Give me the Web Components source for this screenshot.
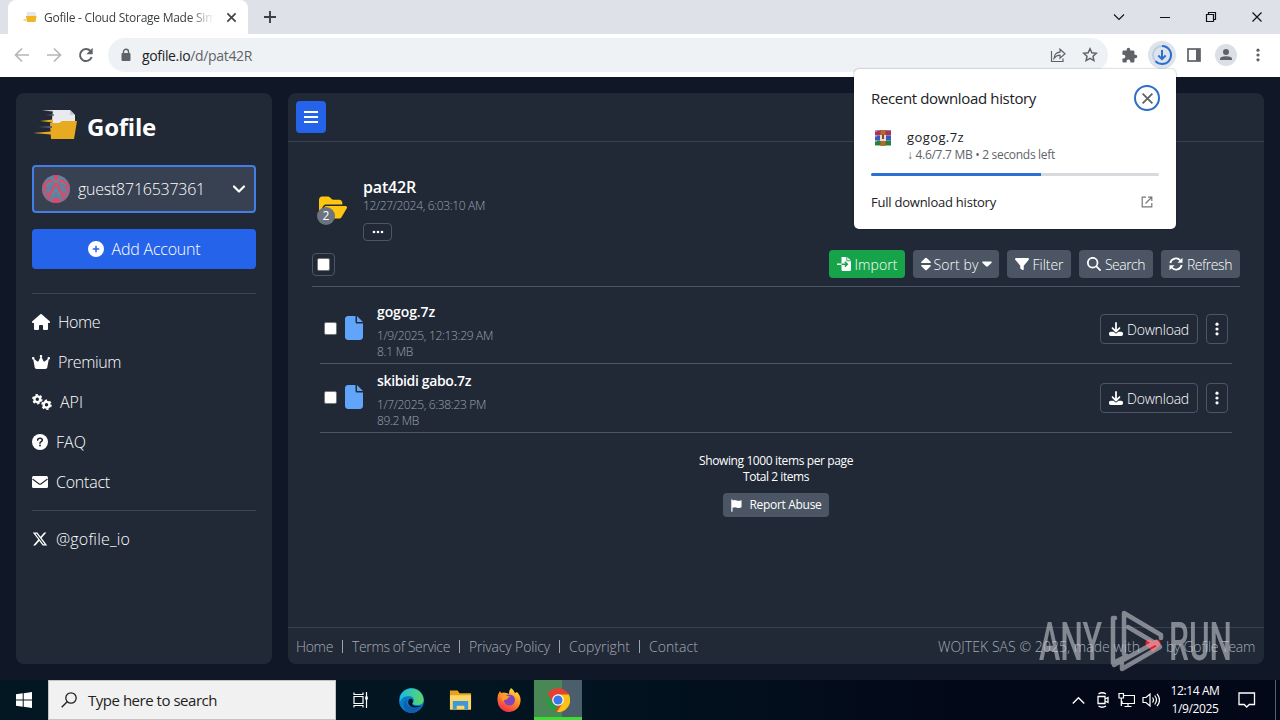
<!DOCTYPE html>
<html lang="en">
<head>
<meta charset="utf-8">
<title>Gofile - Cloud Storage Made Simple</title>
<style>
  body {
    margin: 0;
    width: 1280px;
    height: 720px;
    overflow: hidden;
    display: flex;
    flex-direction: column;
    position: relative;
    background: #101727;
    font-family: "Open Sans", "Noto Sans", sans-serif;
    font-size: 16px;
  }
  main {
    height: 571px;
    padding: 16px;
    display: flex;
    gap: 16px;
  }
</style>
</head>
<body>
<browser-chrome></browser-chrome>
<main>
  <side-bar></side-bar>
  <file-manager>
    <file-row name="gogog.7z" name-w="58" date="1/9/2025, 12:13:29 AM" date-w="116" size="8.1 MB" size-w="36"></file-row>
    <file-row name="skibidi gabo.7z" name-w="94" date="1/7/2025, 6:38:23 PM" date-w="109" size="89.2 MB" size-w="42"></file-row>
  </file-manager>
</main>
<task-bar></task-bar>
<download-popup></download-popup>
<water-mark></water-mark>

<script>
// name: [viewBox, markup]
const icons = {
  house: ["0 0 576 512", '<path d="M575.8 255.5c0 18-15 32.1-32 32.1h-32l.7 160.2V472c0 22.1-17.9 40-40 40H392c-22.1 0-40-17.9-40-40V384c0-17.700-14.300-32-32-32H256c-17.700 0-32 14.300-32 32v88c0 22.100-17.900 40-40 40H104c-22.100 0-40-17.900-40-40V287.600H32c-18 0-32-14-32-32.100c0-9 3-17 10-24L266.400 8c7-7 15-8 22-8s15 2 21 7L564.800 231.500c8 7 12 15 11 24z"/>'],
  crown: ["0 0 576 512", '<path d="M309 106c11.4-7 19-19.7 19-34c0-22.1-17.9-40-40-40s-40 17.9-40 40c0 14.4 7.6 27 19 34L209.7 220.6c-9.1 18.2-32.7 23.4-48.6 10.7L72 160c5-6.7 8-15 8-24c0-22.1-17.9-40-40-40S0 113.9 0 136s17.9 40 40 40h.7L86.4 427.4c5.5 30.4 32 52.6 63 52.6H426.6c30.9 0 57.4-22.1 63-52.6L535.3 176h.7c22.1 0 40-17.900 40-40s-17.900-40-40-40s-40 17.900-40 40c0 9 3 17.300 8 24l-89.100 71.300c-15.900 12.700-39.500 7.500-48.600-10.700L309 106z"/>'],
  gears: ["0 0 20 16", '<g fill="none" stroke="currentColor"><circle cx="5.300" cy="5.200" r="2.900" stroke-width="2.300"/><circle cx="5.300" cy="5.200" r="4.400" stroke-width="1.700" stroke-dasharray="2.300 2.308"/><circle cx="14.500" cy="10.800" r="2.900" stroke-width="2.300"/><circle cx="14.500" cy="10.800" r="4.400" stroke-width="1.700" stroke-dasharray="2.300 2.308"/></g>'],
  question: ["0 0 16 16", '<circle cx="8" cy="8" r="8"/><path d="M5.700 6.100C5.700 3.600 10.300 3.500 10.300 6.200C10.300 7.700 8 7.700 8 9.300" fill="none" stroke="#212937" stroke-width="1.600" stroke-linecap="round"/><circle cx="8" cy="11.600" r="1" fill="#212937"/>'],
  mail: ["0 0 16 16", '<rect y="2" width="16" height="12" rx="1.500"/><path d="M.5 5l6.300 4.700q1.200.8 2.400 0L15.500 5" fill="none" stroke="#212937" stroke-width="1.100"/>'],
  x: ["0 0 512 512", '<path d="M389.2 48h70.6L305.6 224.2 487 464H345L233.7 318.6 106.5 464H35.8L200.7 275.5 26.8 48H172.4L272.9 180.9 389.2 48zM364.4 421.8h39.1L151.1 88h-42L364.4 421.8z"/>'],
  plus: ["0 0 512 512", '<path d="M256 512A256 256 0 1 0 256 0a256 256 0 1 0 0 512zM232 344V280H168c-13.3 0-24-10.7-24-24s10.7-24 24-24h64V168c0-13.3 10.7-24 24-24s24 10.7 24 24v64h64c13.3 0 24 10.7 24 24s-10.7 24-24 24H280v64c0 13.3-10.7 24-24 24s-24-10.7-24-24z"/>'],
  chevron: ["0 0 14 14", '<path d="M2 4.500l5 5 5-5" fill="none" stroke="currentColor" stroke-width="2.200" stroke-linecap="round" stroke-linejoin="round"/>'],
  bars: ["0 0 14 14", '<path d="M0 2h14M0 7h14M0 12h14" stroke="currentColor" stroke-width="2"/>'],
  folder: ["0 0 576 512", '<path d="M88.7 223.8L0 375.8V96C0 60.7 28.7 32 64 32H181.5c17 0 33.3 6.7 45.3 18.7l26.5 26.5c12 12 28.3 18.7 45.3 18.7H416c35.3 0 64 28.7 64 64v32H144c-22.8 0-43.8 12.1-55.3 31.8zm27.6 16.1C122.1 230 132.6 224 144 224H544c11.5 0 22 6.1 27.7 16.1s5.7 22.2-.1 32.1l-112 192C453.9 474 443.4 480 432 480H32c-11.500 0-22-6.100-27.700-16.100s-5.700-22.200 .1-32.100l112-192z"/>'],
  dots: ["0 0 12 4", '<circle cx="2" cy="2" r="1.300"/><circle cx="6" cy="2" r="1.300"/><circle cx="10" cy="2" r="1.300"/>'],
  kebab: ["0 0 4 14", '<circle cx="2" cy="2.200" r="1.600"/><circle cx="2" cy="7" r="1.600"/><circle cx="2" cy="11.800" r="1.600"/>'],
  import: ["0 0 16 14", '<path d="M4.500 0h5.500l4 3.600V12.500q0 1.500-1.500 1.500H6q-1.500 0-1.500-1.500z"/><path d="M4.500 7.200h5.500M7.800 4.800l2.500 2.400-2.500 2.400" fill="none" stroke="#16a34a" stroke-width="1.500"/><path d="M0 7.200h4.500" stroke="currentColor" stroke-width="1.400"/><path d="M9.800 0v3.800H14" fill="none" stroke="#16a34a" stroke-width=".9"/>'],
  sort: ["0 0 10 14", '<path d="M5 .7Q5.500.7 6 1.200L9.600 4.800Q10.200 6 9 6H1Q-.2 6 .4 4.800L4 1.200Q4.500.7 5 .7zM5 13.300Q5.500 13.300 6 12.800L9.600 9.200Q10.200 8 9 8H1Q-.2 8 .4 9.200L4 12.800Q4.500 13.300 5 13.300z"/>'],
  caret: ["0 0 10 14", '<path d="M1 4.500H9Q10.200 4.500 9.600 5.700L6 9.300Q5 10 4 9.300L.4 5.700Q-.2 4.500 1 4.500z"/>'],
  filter: ["0 0 512 512", '<path d="M3.9 54.9C10.5 40.9 24.5 32 40 32H472c15.5 0 29.5 8.9 36.1 22.9s4.6 30.5-5.2 42.5L320 320.9V448c0 12.1-6.800 23.200-17.700 28.600s-23.800 4.300-33.500-3l-64-48c-8.100-6-12.800-15.500-12.800-25.600V320.900L9 97.300C-.7 85.400-2.800 68.800 3.900 54.900z"/>'],
  search: ["0 0 512 512", '<path d="M416 208c0 45.900-14.900 88.300-40 122.700L502.600 457.400c12.500 12.500 12.500 32.800 0 45.300s-32.800 12.500-45.300 0L330.700 376c-34.400 25.200-76.800 40-122.700 40C93.100 416 0 322.900 0 208S93.100 0 208 0S416 93.100 416 208zM208 352a144 144 0 1 0 0-288 144 144 0 1 0 0 288z"/>'],
  rotate: ["0 0 14 14", '<path d="M1.300 6A5.800 5.800 0 0 1 11.400 3.500M12.700 8A5.800 5.800 0 0 1 2.600 10.500" fill="none" stroke="currentColor" stroke-width="1.800"/><path d="M13.500.7V5.700H8.500zM.5 13.300V8.300H5.500z"/>'],
  file: ["0 0 384 512", '<path d="M0 64C0 28.700 28.700 0 64 0H224V128c0 17.700 14.300 32 32 32H384V448c0 35.300-28.700 64-64 64H64c-35.300 0-64-28.700-64-64V64zm384 64H256V0L384 128z"/>'],
  download: ["0 0 512 512", '<path d="M288 32c0-17.700-14.300-32-32-32s-32 14.300-32 32V274.700l-73.400-73.400c-12.500-12.500-32.800-12.500-45.300 0s-12.500 32.800 0 45.300l128 128c12.500 12.500 32.800 12.500 45.300 0l128-128c12.500-12.500 12.500-32.800 0-45.300s-32.800-12.500-45.300 0L288 274.700V32zM64 352c-35.300 0-64 28.700-64 64v32c0 35.300 28.700 64 64 64H448c35.300 0 64-28.700 64-64V416c0-35.300-28.700-64-64-64H346.500l-45.300 45.300c-25 25-65.500 25-90.500 0L165.500 352H64z"/>'],
  flag: ["0 0 12 14", '<path d="M.3.5Q1 0 1.700.5V1.500Q4 .5 6 1.500T11.500 1.200V9Q9 10.400 6.500 9.400T1.700 9.500V13.500Q1 14 .3 13.500z"/>'],
  logo: ["0 0 44 32", '<path d="M20 1h17l5 5v14H18z" fill="#e9eaf0"/><path d="M37 1v5h5z" fill="#c5c8d2"/><path d="M17 14h9l3-2h15l-3 18H18z" fill="#e8aa20"/><path d="M7 12l13-1.500v3zM0 24l18-1.500v3z" fill="#e8aa20"/><path d="M9 1.500L21 1v1.500z" fill="#e9eaf0"/><path d="M12 6l9-.7v1.500zM5 18l14-1v2z" fill="#5a6069"/>'],
  avatar: ["0 0 28 28", '<defs><clipPath id="c"><circle cx="14" cy="14" r="14"/></clipPath></defs><g clip-path="url(#c)"><rect width="28" height="28" fill="#62809f"/><g fill="none" stroke="#dc4a67" stroke-width="2.200"><path d="M0 12Q14-4 28 12M1 17Q7 4 14 5T27 17M5 26L14 7L23 26M8 17h12M0 21l7-3M28 21l-7-3M9 28q5-8 10 0"/></g><path d="M9 3l5 4 5-4M4 11l5-4M24 11l-5-4M10 20l4-5 4 5" fill="none" stroke="#3c9ead" stroke-width="1.500"/><path d="M11 0h6l-3 4zM11 28h6l-3-5z" fill="#ef4060"/></g>'],
  back: ["0 0 16 16", '<path d="M15 8H2M8 1.500L1.500 8 8 14.500" fill="none" stroke="currentColor" stroke-width="1.700"/>'],
  forward: ["0 0 16 16", '<path d="M1 8h13M8 1.500L14.500 8 8 14.500" fill="none" stroke="currentColor" stroke-width="1.700"/>'],
  reload: ["0 0 16 16", '<path d="M13.700 10A6 6 0 1 1 12.500 4" fill="none" stroke="currentColor" stroke-width="2"/><path d="M14.700.7v6.500H8.300z"/>'],
  lock: ["0 0 10 14", '<rect x=".5" y="5" width="9" height="8" rx="1"/><path d="M2.500 5.500V3.700a2.500 2.500 0 0 1 5 0v1.800" fill="none" stroke="currentColor" stroke-width="1.400"/>'],
  share: ["0 0 16 16", '<path d="M1.500 4v10.500h11.500v-3M4 11.500Q4.500 5.500 10 5.200V2.200l5 4.500-5 4.500V8.200Q6.500 8 4 11.500z" fill="none" stroke="currentColor" stroke-width="1.200"/>'],
  star: ["0 0 16 16", '<path d="M8 1.800l1.900 4 4.400.5-3.300 3 .9 4.300L8 11.400l-3.900 2.200.9-4.300-3.300-3 4.400-.5z" fill="none" stroke="currentColor" stroke-width="1.500"/>'],
  puzzle: ["0 0 24 24", '<path d="M20.500 11H19V7a2 2 0 0 0-2-2h-4V3.500a2.500 2.500 0 0 0-5 0V5H4a2 2 0 0 0-2 2v3.800h1.500a2.700 2.700 0 0 1 0 5.400H2V20a2 2 0 0 0 2 2h3.800v-1.500a2.700 2.700 0 0 1 5.400 0V22H17a2 2 0 0 0 2-2v-4h1.500a2.500 2.500 0 0 0 0-5z"/>'],
  progress: ["0 0 28 28", '<circle cx="14" cy="14" r="14" fill="#dfe3ea"/><circle cx="14" cy="14" r="9" fill="none" stroke="#bccbe4" stroke-width="2"/><path d="M14 5a9 9 0 1 1-6.500 15.200" fill="none" stroke="#2c6fd2" stroke-width="2"/><path d="M14 9v9M10.300 14.500L14 18.200l3.700-3.700" fill="none" stroke="#2c6fd2" stroke-width="2"/>'],
  panel: ["0 0 14 14", '<rect x="1" y="1" width="12" height="12" fill="none" stroke="currentColor" stroke-width="1.700"/><path d="M9 1h4v12H9z"/>'],
  person: ["0 0 22 22", '<circle cx="11" cy="11" r="11" fill="#dcdfe6"/><circle cx="11" cy="8" r="3"/><path d="M5 16v-1.200Q5 12.300 11 12.300t6 2.500V16z"/>'],
  tabicon: ["0 0 14 14", '<path d="M4 2h8l1 2v4H3z" fill="#e6e6ea"/><path d="M3 6h10.500L12.500 12H4z" fill="#efb526"/><path d="M0 9h4v2H1z" fill="#f6d99a"/>'],
  close: ["0 0 12 12", '<path d="M1.500 1.500l9 9M10.500 1.500l-9 9" stroke="currentColor" stroke-width="var(--sw, 1.700)"/>'],
  add: ["0 0 12 12", '<path d="M6 0v12M0 6h12" stroke="currentColor" stroke-width="1.900"/>'],
  down: ["0 0 12 12", '<path d="M1 3.500l5 5 5-5" fill="none" stroke="currentColor" stroke-width="1.100"/>'],
  up: ["0 0 12 12", '<path d="M.7 8.800L6 3.500l5.300 5.300" fill="none" stroke="currentColor" stroke-width="1.300"/>'],
  minimize: ["0 0 12 12", '<path d="M1 6.500h10" stroke="currentColor"/>'],
  restore: ["0 0 12 12", '<path d="M1.500 3.500h7v7h-7zM3.500 3.500v-2h7v7h-2" fill="none" stroke="currentColor" stroke-width="1.200"/>'],
  rar: ["0 0 16 16", '<path d="M0 0h16v5H0z" fill="#b03050"/><path d="M0 5h16v5H0z" fill="#3d58b8"/><path d="M0 10h16v5.500H0z" fill="#25823d"/><path d="M5.500 0h5v16h-5z" fill="#b96a2b"/><path d="M5 5h6v6H5z" fill="#e4ddd2"/><path d="M7 4.500h2V9H7z" fill="#70502f"/><path d="M0 .5h5M11 .5h5M0 5.500h5M11 5.500h5M0 10.500h5M11 10.500h5" stroke="#7f84b8"/><path d="M1 0v16" stroke="#dcc7d6" stroke-dasharray="2 3"/>'],
  external: ["0 0 12 12", '<path d="M5 1.200H1.200v9.600h9.600V7M7 1.200h3.800V5M10.500 1.500L4.500 7.500" fill="none" stroke="currentColor" stroke-width="1.200"/>'],
  windows: ["0 0 16 16", '<path d="M0 2.300L6.700 1.300V7.500H0zM7.700 1.200L16 0v7.500H7.700zM0 8.500h6.700v6.200L0 13.700zM7.700 8.500H16V16l-8.300-1.200z"/>'],
  lens: ["0 0 16 16", '<circle cx="10" cy="6" r="5.200" fill="none" stroke="currentColor" stroke-width="1.300"/><path d="M6.200 9.700L.7 15.300" stroke="currentColor" stroke-width="1.400"/>'],
  tasks: ["0 0 16 16", '<path d="M1.500 4.500h9v7h-9zM1.500.5v2h9v-2M1.500 15.500v-2h9v2M14 0v16" fill="none" stroke="currentColor" stroke-width="1.200"/><path d="M12.700 4.500h2.600v3h-2.600z"/>'],
  edge: ["0 0 24 24", '<defs><linearGradient id="e" x1="0" x2="1"><stop stop-color="#1abbe0"/><stop offset="1" stop-color="#5fd764"/></linearGradient></defs><circle cx="12" cy="12" r="12" fill="#087bc6"/><path d="M1 8C5-1 17-2 22 6q4 8-2 10-5 1-7-1c3-4 0-7-3-7Q4 7 1 13z" fill="url(#e)"/><path d="M8 10c-3 5 1 10 9 8q4-1 5-1-4 7-10 7C3 23 3 13 8 10z" fill="#105eb0"/><path d="M10 10.500q-2 2-1 4.500 2 4 8 3.500l5-1.500-4 .2q-5 0-5.500-2.200 2-3-.3-4.800z" fill="#021721"/>'],
  explorer: ["0 0 24 22", '<path d="M1 1h8l2 3h12v17H1z" fill="#e8a41c"/><path d="M1 6h22v15H1z" fill="#fbd66a"/><path d="M4 12h16v9h-4v-4H8v4H4z" fill="#3d98d9"/><path d="M2 2h6v2H2z" fill="#ef9a27"/>'],
  firefox: ["0 0 24 24", '<defs><linearGradient id="f" x1=".8" y1="0" x2=".3" y2="1"><stop stop-color="#ffe53d"/><stop offset=".5" stop-color="#ff8a25"/><stop offset="1" stop-color="#f0284f"/></linearGradient></defs><path d="M14 0q3 2 4 5l2-1q4 4 3.500 9A11.500 11.500 0 0 1 .5 12Q0 7 3 3l1 2 3-.5Q11 5 12 6q0-4 2-6z" fill="url(#f)"/><circle cx="12.500" cy="12" r="5.500" fill="#8044bd"/><path d="M4 8q4-2 6 0l4 .5q-4 1-4 3-3-.5-4 2z" fill="#ff9c29"/>'],
  chrome: ["0 0 24 24", '<circle cx="12" cy="12" r="12" fill="#e34133"/><path d="M12 6.500h10.700A12 12 0 0 1 11 24L17 14.500z" fill="#fbc414"/><path d="M1.600 6l5.700 9.500L12 17.500 9.500 23.700A12 12 0 0 1 1.600 6z" fill="#269b48"/><circle cx="12" cy="12" r="5.800" fill="#fff"/><circle cx="12" cy="12" r="4.600" fill="#3779e6"/>'],
  camera: ["0 0 16 16", '<path d="M3 4.500h7v7H3zM10 7l3-1.500v5L10 9M3.500 2Q7-.5 11 2M3.500 14Q7 16.500 11 14" fill="none" stroke="currentColor" stroke-width="1.300"/>'],
  network: ["0 0 17 16", '<path d="M5.500 3.500h11v8H4V9M10 11.500v3M6.500 14.500h7M1 1.500h4.500V6H1zM3.300 6v8" fill="none" stroke="currentColor" stroke-width="1.200"/>'],
  volume: ["0 0 18 16", '<path d="M1 5.500h3l4-3.500v12l-4-3.500H1zM10.500 5.500q2 2.500 0 5M12.700 3.500q3.600 4.500 0 9M15 1.800q5 6.200 0 12.400" fill="none" stroke="currentColor" stroke-width="1.200"/>'],
  notice: ["0 0 18 16", '<path d="M1 1h15.500v11.500h-5.200L8.700 15l-2.500-2.500H1z" fill="none" stroke="currentColor" stroke-width="1.300"/>'],
  heart: ["0 0 16 14", '<path d="M8 13L1.500 7C-2 2 4-2 8 2.300 12-2 18 2 14.500 7z" fill="#e01c28"/>'],
};

class UiIcon extends HTMLElement {
  constructor() {
    super();
    this.attachShadow({ mode: "open" });
  }

  connectedCallback() {
    const [box, markup] = icons[this.getAttribute("name")];
    const width = this.getAttribute("w") || 16;
    const height = this.getAttribute("h") || width;
    this.shadowRoot.innerHTML = `
      <style>
        :host { display: inline-flex; flex: none; }
        svg { display: block; fill: currentColor; }
      </style>
      <svg width="${width}" height="${height}" viewBox="${box}">${markup}</svg>`;
  }
}

// One line of text, tracked so that it fills the width in its "w" attribute
class UiText extends HTMLElement {
  constructor() {
    super();
    this.attachShadow({ mode: "open" });
    this.shadowRoot.innerHTML = `
      <style>
        :host { display: inline-block; flex: none; white-space: nowrap; }
      </style>
      <slot></slot>`;
  }

  connectedCallback() {
    const width = Number(this.getAttribute("w"));
    if (!width) return;
    const natural = this.getBoundingClientRect().width;
    this.style.letterSpacing = (width - natural) / this.textContent.length + "px";
    this.style.width = width + "px";
  }
}

class BrowserChrome extends HTMLElement {
  constructor() {
    super();
    this.attachShadow({ mode: "open" });
    this.shadowRoot.innerHTML = `
      <style>
        :host { display: block; height: 77px; flex: none; background: #fff; color: #3c4043; }
        .tabs { height: 34px; background: #dee1e8; display: flex; align-items: center; }
        .tab {
          box-sizing: border-box; width: 240px; height: 34px; margin-left: 8px; padding: 0 10px 0 15px;
          display: flex; align-items: center; background: #fff; border-radius: 8px 8px 0 0; font-size: 12px;
        }
        .title { width: 170px; margin-left: 7px; overflow: hidden; -webkit-mask-image: linear-gradient(to right, #000 145px, transparent 170px); }
        .tab ui-icon:last-child { margin-left: 12px; }
        .new { margin-left: 16px; }
        .window { margin-left: auto; display: flex; gap: 34px; padding-right: 17px; color: #111; }
        .bar { height: 42px; display: flex; align-items: center; color: #5f6368; }
        .nav { display: flex; gap: 16px; padding-left: 14px; width: 94px; }
        .pale { color: #b5b7ba; }
        .address {
          box-sizing: border-box; width: 1000px; height: 34px; border-radius: 17px; background: #eff2f5;
          display: flex; align-items: center; padding: 0 10px 0 13px; font-size: 14px;
        }
        .address ui-text { margin-left: 11px; }
        .address b { font-weight: 400; color: #202124; }
        .address .share { margin-left: auto; margin-right: 16px; }
        .tools { display: flex; align-items: center; padding-left: 13px; }
      </style>
      <div class="tabs">
        <div class="tab">
          <ui-icon name="tabicon" w="14"></ui-icon>
          <div class="title"><ui-text w="172">Gofile - Cloud Storage Made Sim</ui-text></div>
          <ui-icon name="close" w="11"></ui-icon>
        </div>
        <ui-icon class="new" name="add" w="12"></ui-icon>
        <div class="window">
          <ui-icon name="down" w="12"></ui-icon>
          <ui-icon name="minimize" w="12"></ui-icon>
          <ui-icon name="restore" w="12"></ui-icon>
          <ui-icon name="close" w="12" style="--sw: 1.200"></ui-icon>
        </div>
      </div>
      <div class="bar">
        <div class="nav">
          <ui-icon class="pale" name="back" w="16"></ui-icon>
          <ui-icon class="pale" name="forward" w="16"></ui-icon>
          <ui-icon name="reload" w="16"></ui-icon>
        </div>
        <div class="address">
          <ui-icon name="lock" w="10" h="14"></ui-icon>
          <ui-text w="110"><b>gofile.io</b>/d/pat42R</ui-text>
          <ui-icon class="share" name="share" w="16"></ui-icon>
          <ui-icon name="star" w="16"></ui-icon>
        </div>
        <div class="tools">
          <ui-icon name="puzzle" w="17"></ui-icon>
          <ui-icon name="progress" w="28" style="margin-left: 10px"></ui-icon>
          <ui-icon name="panel" w="14" style="margin-left: 11px"></ui-icon>
          <ui-icon name="person" w="22" style="margin-left: 14px"></ui-icon>
          <ui-icon name="kebab" w="4" h="14" style="margin-left: 19px"></ui-icon>
        </div>
      </div>`;
  }
}

class SideBar extends HTMLElement {
  constructor() {
    super();
    this.attachShadow({ mode: "open" });
    this.shadowRoot.innerHTML = `
      <style>
        :host {
          box-sizing: border-box; width: 256px; padding: 16px; flex: none; display: flex; flex-direction: column;
          border-radius: 8px; background: #212937; color: #fff; font-weight: 300;
        }
        .brand { height: 32px; display: flex; align-items: center; font-size: 24px; font-weight: 700; }
        .brand ui-text { margin-left: 9px; line-height: 32px; margin-top: 3px; }
        .account {
          box-sizing: border-box; height: 48px; margin-top: 24px; padding: 0 8px; display: flex; align-items: center;
          background: #374151; border: 2px solid #437de6; border-radius: 4px;
        }
        .account ui-text { margin-left: 8px; }
        .account ui-icon:last-child { margin-left: auto; }
        .add {
          height: 40px; margin-top: 16px; display: flex; justify-content: center; align-items: center; gap: 8px;
          background: #2563eb; border-radius: 4px;
        }
        hr { width: 100%; margin: 0; border: 0; height: 1px; background: #3c4553; }
        nav { padding: 8px 0; }
        .item { height: 40px; display: flex; align-items: center; gap: 8px; }
      </style>
      <div class="brand"><ui-icon name="logo" w="46" h="32"></ui-icon><ui-text w="69">Gofile</ui-text></div>
      <div class="account">
        <ui-icon name="avatar" w="28"></ui-icon><ui-text w="127">guest8716537361</ui-text>
        <ui-icon name="chevron" w="14"></ui-icon>
      </div>
      <div class="add"><ui-icon name="plus"></ui-icon><ui-text w="89">Add Account</ui-text></div>
      <hr style="margin-top: 24px">
      <nav>
        <div class="item"><ui-icon name="house" w="18" h="16"></ui-icon><ui-text w="42">Home</ui-text></div>
        <div class="item"><ui-icon name="crown" w="18" h="16"></ui-icon><ui-text w="63">Premium</ui-text></div>
        <div class="item"><ui-icon name="gears" w="20" h="16"></ui-icon><ui-text w="23">API</ui-text></div>
        <div class="item"><ui-icon name="question"></ui-icon><ui-text w="30">FAQ</ui-text></div>
        <div class="item"><ui-icon name="mail"></ui-icon><ui-text w="54">Contact</ui-text></div>
      </nav>
      <hr>
      <div class="item" style="margin-top: 8px"><ui-icon name="x"></ui-icon><ui-text w="74">@gofile_io</ui-text></div>`;
  }
}

class FileRow extends HTMLElement {
  constructor() {
    super();
    this.attachShadow({ mode: "open" });
  }

  connectedCallback() {
    const get = (name) => this.getAttribute(name);
    this.shadowRoot.innerHTML = `
      <style>
        :host {
          box-sizing: border-box; height: 69px; padding: 0 4px; display: flex; align-items: center;
          border-bottom: 1px solid #4b5563;
        }
        .check { box-sizing: border-box; width: 13px; height: 13px; margin-bottom: 2px; border: 1px solid #777; border-radius: 2px; background: #fff; }
        .icon { margin-left: 8px; margin-bottom: 2px; color: #60a5fa; }
        .info {
          align-self: flex-start; margin-left: 14px; padding-top: 7px; display: flex; flex-direction: column;
          align-items: flex-start; font-size: 12px; line-height: 16px; color: #9ca3af;
        }
        .name { margin-bottom: 6px; font-size: 14px; line-height: 20px; font-weight: 600; color: #fff; }
        .button {
          box-sizing: border-box; height: 30px; display: flex; justify-content: center; align-items: center; gap: 4px;
          border: 1px solid #4b5563; border-radius: 4px; font-size: 14px;
        }
        .get { width: 98px; margin-left: auto; margin-right: 8px; }
        .more { width: 22px; }
      </style>
      <div class="check"></div>
      <ui-icon class="icon" name="file" w="18" h="24"></ui-icon>
      <div class="info">
        <ui-text class="name" w="${get("name-w")}">${get("name")}</ui-text>
        <ui-text w="${get("date-w")}">${get("date")}</ui-text>
        <ui-text w="${get("size-w")}">${get("size")}</ui-text>
      </div>
      <div class="button get"><ui-icon name="download" w="14"></ui-icon><ui-text w="62">Download</ui-text></div>
      <div class="button more"><ui-icon name="kebab" w="4" h="14"></ui-icon></div>`;
  }
}

class FileManager extends HTMLElement {
  constructor() {
    super();
    this.attachShadow({ mode: "open" });
    this.shadowRoot.innerHTML = `
      <style>
        :host {
          width: 976px; flex: none; display: flex; flex-direction: column; border-radius: 8px;
          background: #212937; color: #fff; font-size: 14px; font-weight: 300;
        }
        header { box-sizing: border-box; height: 49px; padding: 8px; border-bottom: 1px solid #374151; }
        .menu { width: 30px; height: 32px; display: flex; align-items: center; justify-content: center; background: #2563eb; border-radius: 4px; }
        .content { flex: 1; padding: 32px 24px 0; }
        .folder { height: 76px; display: flex; }
        .pic { position: relative; width: 51px; color: #ffc50f; }
        .pic ui-icon { margin: 21px 0 0 7px; }
        .count {
          position: absolute; left: 5px; top: 33px; width: 18px; height: 18px; border-radius: 9px;
          background: #6b7280; color: #fff; font-size: 12px; font-weight: 400; line-height: 18px; text-align: center;
        }
        .about { display: flex; flex-direction: column; align-items: flex-start; }
        .about h1 { margin: 1px 0 0; font-size: 16px; line-height: 24px; font-weight: 600; }
        .date { margin-top: -1px; font-size: 12px; line-height: 16px; color: #9ca3af; }
        .more { box-sizing: border-box; width: 29px; height: 18px; margin-top: 9px; display: flex; align-items: center; justify-content: center; border: 1px solid #4b5563; border-radius: 4px; }
        .bar { height: 28px; padding-bottom: 8px; border-bottom: 1px solid #4b5563; display: flex; align-items: center; gap: 8px; }
        .all { box-sizing: border-box; width: 23px; height: 23px; margin-right: auto; padding: 4px; border: 1px solid #4b5563; border-radius: 4px; }
        .all div { box-sizing: border-box; width: 13px; height: 13px; border: 1px solid #777; border-radius: 2px; background: #fff; }
        .button { box-sizing: border-box; height: 28px; display: flex; align-items: center; justify-content: center; gap: 4px; border-radius: 4px; background: #4b5563; }
        .list { padding: 8px 8px 0; }
        .total { margin-top: 20px; display: flex; flex-direction: column; align-items: center; font-size: 12px; font-weight: 400; line-height: 16px; }
        .report { width: 106px; height: 24px; margin-top: 8px; gap: 8px; }
        footer { height: 36px; padding: 0 9px 0 8px; border-top: 1px solid #374151; display: flex; align-items: center; color: #a5abb6; }
        footer i { width: 1px; height: 13px; margin: 0 9px; background: #9ca3af; }
        .made { margin-left: auto; display: flex; align-items: center; gap: 5px; }
      </style>
      <header><div class="menu"><ui-icon name="bars" w="14"></ui-icon></div></header>
      <div class="content">
        <div class="folder">
          <div class="pic"><ui-icon name="folder" w="28" h="25"></ui-icon><div class="count">2</div></div>
          <div class="about">
            <h1><ui-text w="53">pat42R</ui-text></h1>
            <ui-text class="date" w="122">12/27/2024, 6:03:10 AM</ui-text>
            <div class="more"><ui-icon name="dots" w="12" h="4"></ui-icon></div>
          </div>
        </div>
        <div class="bar">
          <div class="all"><div></div></div>
          <div class="button" style="width: 76px; background: #16a34a; gap: 2px"><ui-icon name="import" w="16" h="14"></ui-icon><ui-text w="43">Import</ui-text></div>
          <div class="button" style="width: 86px; gap: 3px"><ui-icon name="sort" w="10" h="14"></ui-icon><ui-text w="45">Sort by</ui-text><ui-icon name="caret" w="10" h="14"></ui-icon></div>
          <div class="button" style="width: 64px"><ui-icon name="filter" w="14"></ui-icon><ui-text w="31">Filter</ui-text></div>
          <div class="button" style="width: 74px"><ui-icon name="search" w="14"></ui-icon><ui-text w="40">Search</ui-text></div>
          <div class="button" style="width: 79px"><ui-icon name="rotate" w="14"></ui-icon><ui-text w="45">Refresh</ui-text></div>
        </div>
        <div class="list"><slot></slot></div>
        <div class="total">
          <ui-text w="154">Showing 1000 items per page</ui-text>
          <ui-text w="66">Total 2 items</ui-text>
          <div class="button report"><ui-icon name="flag" w="11" h="13"></ui-icon><ui-text w="72">Report Abuse</ui-text></div>
        </div>
      </div>
      <footer>
        <ui-text w="37">Home</ui-text><i></i>
        <ui-text w="98">Terms of Service</ui-text><i></i>
        <ui-text w="81">Privacy Policy</ui-text><i></i>
        <ui-text w="61">Copyright</ui-text><i></i>
        <ui-text w="49">Contact</ui-text>
        <div class="made">
          <ui-text w="202">WOJTEK SAS © 2025, made with</ui-text>
          <ui-icon name="heart" w="16" h="14"></ui-icon>
          <ui-text w="89">by Gofile Team</ui-text>
        </div>
      </footer>`;
  }
}

class DownloadPopup extends HTMLElement {
  constructor() {
    super();
    this.attachShadow({ mode: "open" });
    this.shadowRoot.innerHTML = `
      <style>
        :host {
          position: absolute; left: 854px; top: 69px; box-sizing: border-box; width: 322px; height: 160px;
          padding: 16px 16px 0 17px; background: #fff; border-radius: 5px; color: #202124; font-size: 13px;
          box-shadow: 0 0 2px rgba(0, 0, 0, .4);
        }
        .head { height: 26px; display: flex; align-items: center; justify-content: space-between; font-size: 15px; }
        .close {
          box-sizing: border-box; width: 26px; height: 26px; border: 2px solid #2c6fc9; border-radius: 50%;
          display: flex; align-items: center; justify-content: center; color: #5f6368;
        }
        .item { height: 36px; margin-top: 15px; display: flex; }
        .item > ui-icon { margin: 4px 16px 0 4px; }
        .item > div { display: flex; flex-direction: column; align-items: flex-start; line-height: 20px; padding-top: 1px; }
        .state { font-size: 12px; line-height: 16px; color: #5f6368; }
        .track { height: 3px; width: 288px; margin-top: 11px; border-radius: 2px; background: #d8dade; overflow: hidden; }
        .track div { width: 170px; height: 3px; background: #2c6fd2; }
        .full { display: flex; align-items: center; justify-content: space-between; margin-top: 16px; padding-right: 7px; height: 20px; }
        .full ui-icon { color: #777; }
      </style>
      <div class="head"><ui-text w="165">Recent download history</ui-text><div class="close"><ui-icon name="close" w="13"></ui-icon></div></div>
      <div class="item">
        <ui-icon name="rar" w="16"></ui-icon>
        <div><ui-text w="57">gogog.7z</ui-text><ui-text class="state" w="148">↓ 4.6/7.7 MB • 2 seconds left</ui-text></div>
      </div>
      <div class="track"><div></div></div>
      <div class="full"><ui-text w="125">Full download history</ui-text><ui-icon name="external" w="12"></ui-icon></div>`;
  }
}

class TaskBar extends HTMLElement {
  constructor() {
    super();
    this.attachShadow({ mode: "open" });
    this.shadowRoot.innerHTML = `
      <style>
        :host { height: 40px; flex: none; display: flex; align-items: center; background: linear-gradient(to right, #021721, #021420 45%, #030818 75%); color: #fff; }
        .start { width: 32px; padding-left: 16px; display: flex; }
        .find {
          box-sizing: border-box; width: 288px; height: 40px; padding-left: 12px; display: flex; align-items: center; gap: 11px;
          background: #f1f1f1; border: 1px solid #c2c5c6; color: #222; font-size: 15px;
        }
        .app { width: 49px; height: 40px; display: flex; align-items: center; justify-content: center; }
        .active { box-sizing: border-box; width: 48px; border-bottom: 3px solid #3ddc30; padding-top: 3px; background: linear-gradient(to right, #498757 58%, #4b5e6c 58%); }
        .tray { margin-left: auto; display: flex; align-items: center; }
        .clock { width: 50px; margin-left: 10px; display: flex; flex-direction: column; align-items: center; font-size: 12px; line-height: 18px; }
        .peek { width: 1px; height: 40px; margin: 0 4px 0 19px; background: #56606a; }
      </style>
      <div class="start"><ui-icon name="windows" w="16"></ui-icon></div>
      <div class="find"><ui-icon name="lens" w="16"></ui-icon><ui-text w="129">Type here to search</ui-text></div>
      <div class="app"><ui-icon name="tasks" w="17" h="16"></ui-icon></div>
      <div class="app" style="width: 52px"><ui-icon name="edge" w="25"></ui-icon></div>
      <div class="app" style="width: 47px"><ui-icon name="explorer" w="23" h="22"></ui-icon></div>
      <div class="app" style="width: 50px"><ui-icon name="firefox" w="24"></ui-icon></div>
      <div class="app active"><ui-icon name="chrome" w="24"></ui-icon></div>
      <div class="tray">
        <ui-icon name="up" w="13"></ui-icon>
        <ui-icon name="camera" w="16" style="margin-left: 10px"></ui-icon>
        <ui-icon name="network" w="17" h="16" style="margin-left: 7px"></ui-icon>
        <ui-icon name="volume" w="18" h="16" style="margin-left: 7px"></ui-icon>
        <div class="clock"><ui-text w="49">12:14 AM</ui-text><ui-text w="47">1/9/2025</ui-text></div>
        <ui-icon name="notice" w="18" h="16" style="margin-left: 18px"></ui-icon>
        <div class="peek"></div>
      </div>`;
  }
}

class WaterMark extends HTMLElement {
  constructor() {
    super();
    this.attachShadow({ mode: "open" });
    this.shadowRoot.innerHTML = `
      <style>
        :host { position: absolute; left: 1036px; top: 606px; opacity: .55; pointer-events: none; }
        svg { display: block; overflow: visible; }
        text { font: 500 53px Roboto, sans-serif; fill: #d4d7dc; }
        path { fill: none; stroke: #d4d7dc; stroke-width: 4.500; stroke-linejoin: round; stroke-linecap: round; }
      </style>
      <svg width="220" height="70" viewBox="0 0 220 70">
        <text x="3" y="54" textLength="63" lengthAdjust="spacingAndGlyphs">ANY</text>
        <text x="133" y="54" textLength="63" lengthAdjust="spacingAndGlyphs">RUN</text>
        <path d="M79 12h-2v45l14-7M88 48V7l37 22v3M92 21l27 16M86 58v5l38-22-4-5L78 59"/>
      </svg>`;
  }
}

window.customElements.define("ui-icon", UiIcon);
window.customElements.define("browser-chrome", BrowserChrome);
window.customElements.define("side-bar", SideBar);
window.customElements.define("file-manager", FileManager);
window.customElements.define("file-row", FileRow);
window.customElements.define("download-popup", DownloadPopup);
window.customElements.define("task-bar", TaskBar);
window.customElements.define("water-mark", WaterMark);
// last, so that every text is measured with its final styles
window.customElements.define("ui-text", UiText);
</script>
</body>
</html>
